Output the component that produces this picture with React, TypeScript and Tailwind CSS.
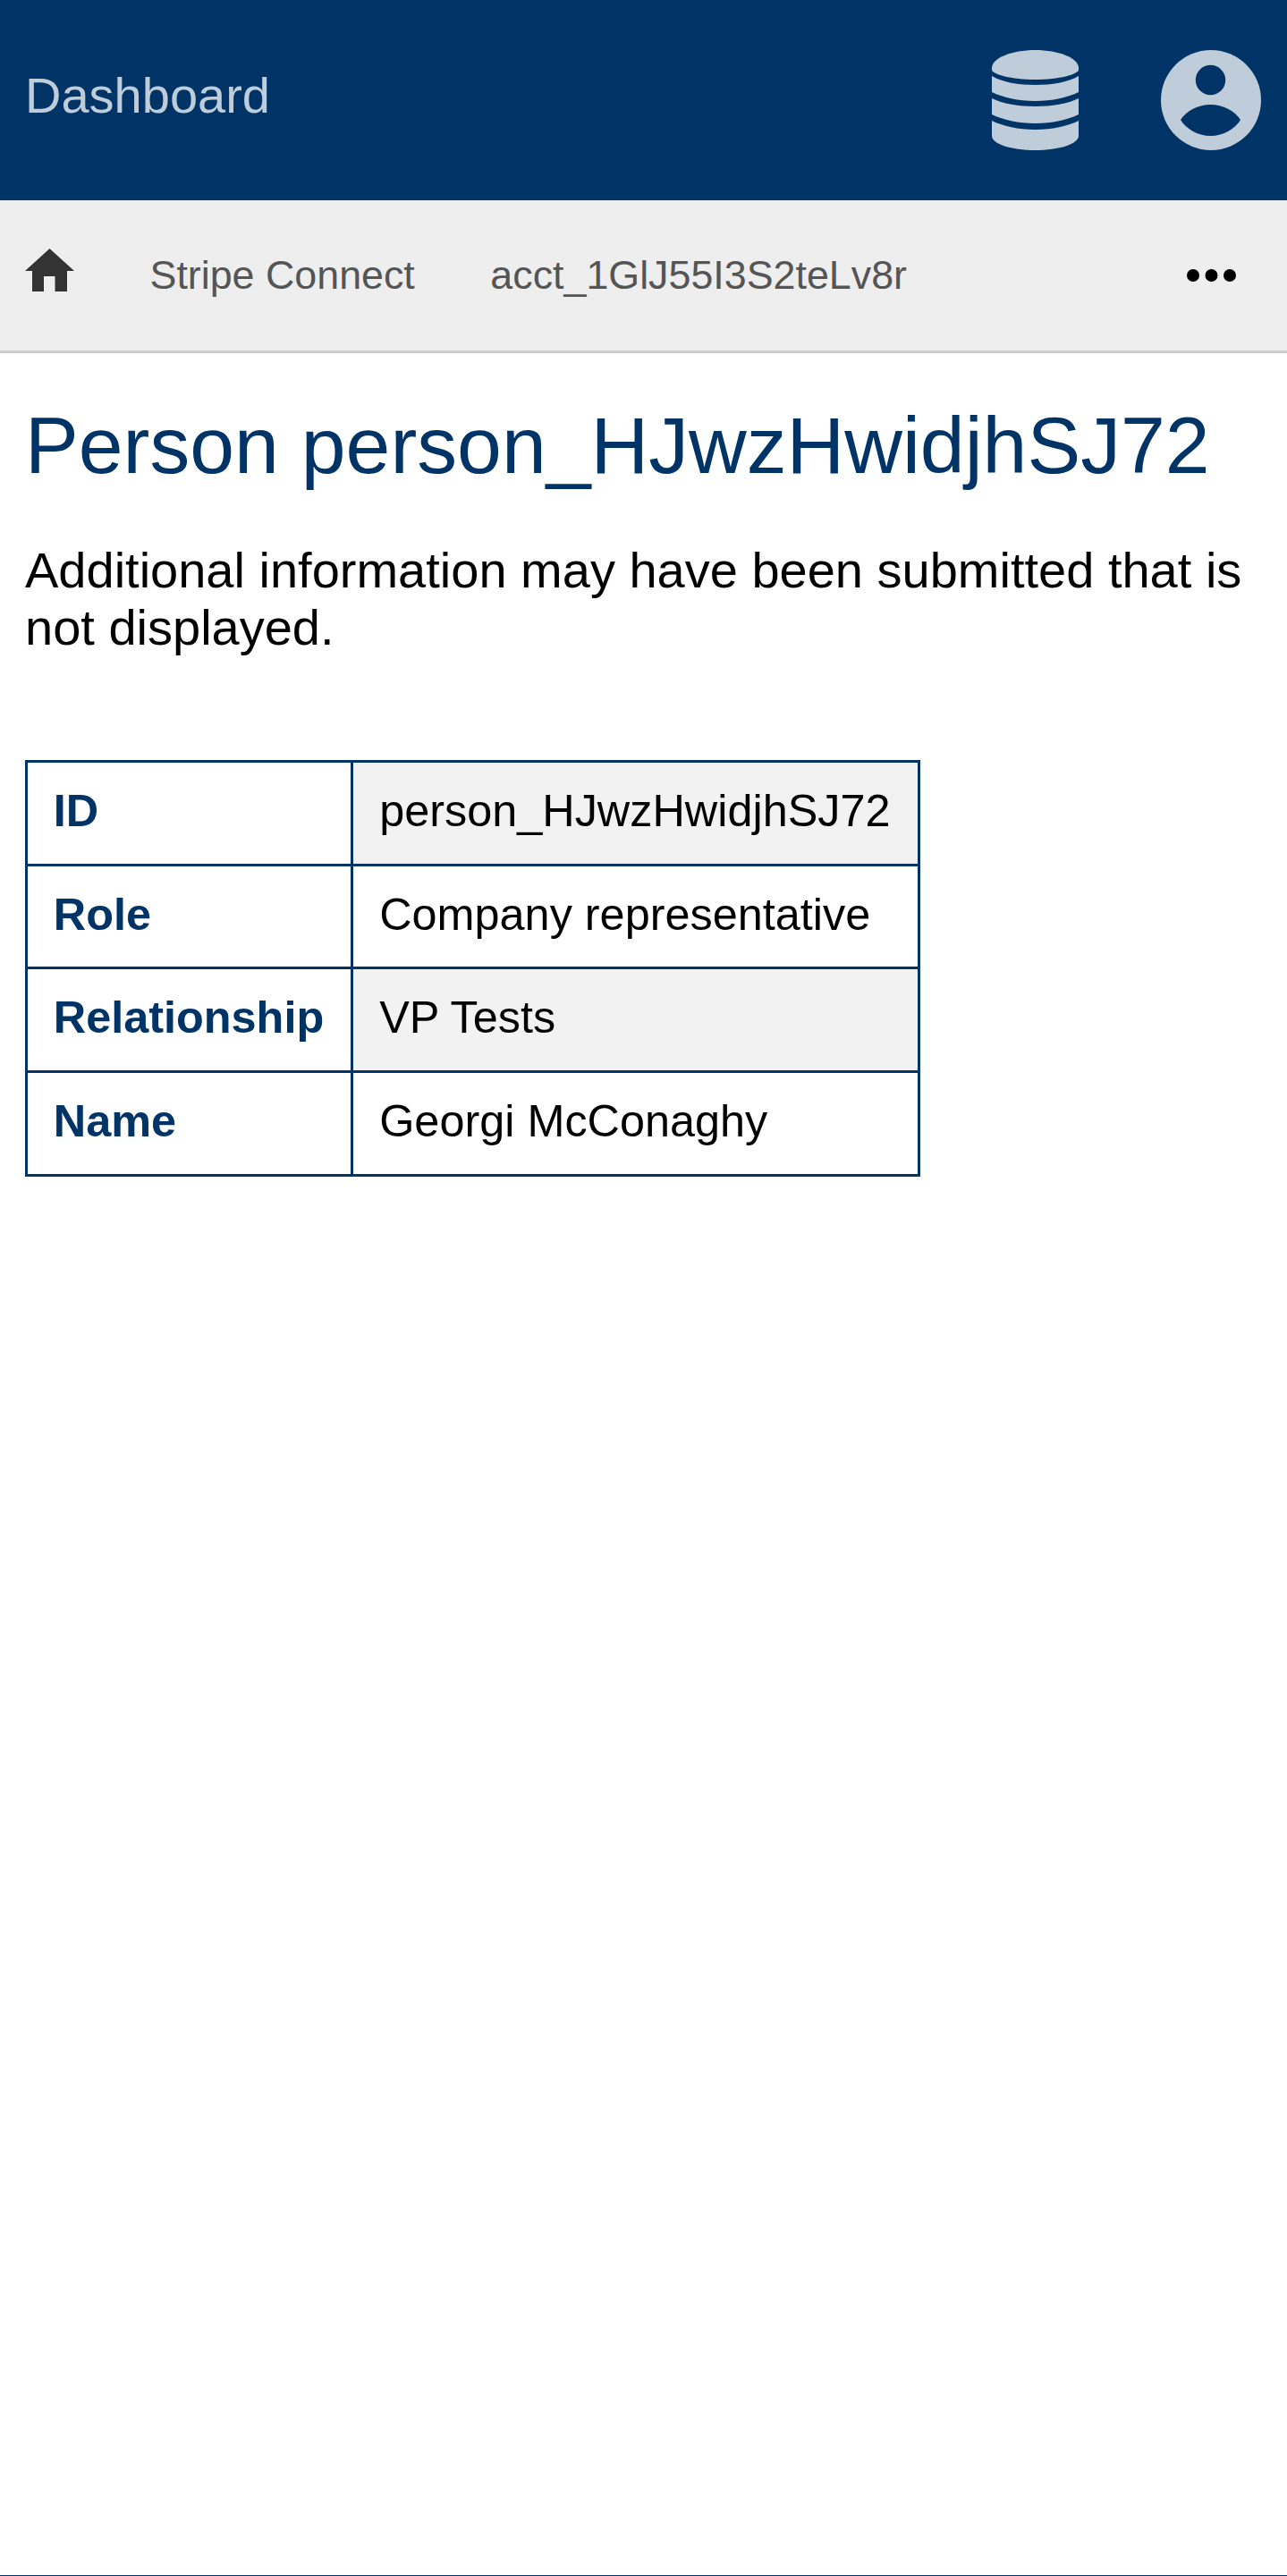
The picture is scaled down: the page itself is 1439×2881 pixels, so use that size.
const rows = [
  ["ID", "person_HJwzHwidjhSJ72"],
  ["Role", "Company representative"],
  ["Relationship", "VP Tests"],
  ["Name", "Georgi McConaghy"],
];

export default function App() {
  return (
    <div className="flex h-[2881px] flex-col border-b border-[#003366] bg-white font-['Liberation_Sans',Arial,sans-serif]">
      <header className="flex h-[224px] shrink-0 items-center justify-between bg-[#003366] pl-[28px] pr-[29px]">
        <a className="mb-[11px] text-[56px] leading-[64px] text-[#bfccd9]">Dashboard</a>
        <div className="flex items-center gap-[92px]">
          <svg viewBox="0 0 97 112" className="h-[112px] w-[97px]" fill="#bfccd9">
            <path d="M0 20C0 9 22 0 48.5 0C75 0 97 9 97 20L97 22C97 27 75 33 48.5 33C22 33 0 27 0 22Z" />
            <path d="M0 29C12 36 30 39 48.5 39C67 39 85 36 97 29L97 47C85 53 67 57 48.5 57C30 57 12 53 0 47Z" />
            <path d="M0 54C12 60 30 63 48.5 63C67 63 85 60 97 54L97 72C85 78 67 82 48.5 82C30 82 12 78 0 72Z" />
            <path d="M0 79C12 85 30 89 48.5 89C67 89 85 85 97 79L97 96C97 105 75 112 48.5 112C22 112 0 105 0 96Z" />
          </svg>
          <svg viewBox="0 0 112 112" className="h-[112px] w-[112px]">
            <circle cx="56" cy="56" r="56" fill="#bfccd9" />
            <circle cx="55.5" cy="33.5" r="16.7" fill="#003366" />
            <path d="M22 78C28 68 42 61 55.5 61C69 61 83 68 89 78C83 88 70 96 55.5 96C41 96 28 88 22 78Z" fill="#003366" />
          </svg>
        </div>
      </header>
      <nav className="flex h-[171px] shrink-0 items-center justify-between border-b-[3px] border-[#cccccc] bg-[#eeeeee] pl-[28px] pr-[57px]">
        <div className="flex items-center gap-[84.5px] pb-[3px] text-[44.8px] leading-[52px] text-[#555555]">
          <svg viewBox="0 0 55 48" className="mb-[10px] h-[48px] w-[55px]">
            <path d="M27.5 0L55 25L47 25L47 48L33.5 48L33.5 31L21 31L21 48L8 48L8 25L0 25Z" fill="#333333" />
          </svg>
          <a>Stripe Connect</a>
          <a>acct_1GlJ55I3S2teLv8r</a>
        </div>
        <svg viewBox="0 0 55 14" className="h-[14px] w-[55px]">
          <circle cx="7" cy="7" r="7" fill="#000" />
          <circle cx="27.5" cy="7" r="7" fill="#000" />
          <circle cx="48" cy="7" r="7" fill="#000" />
        </svg>
      </nav>
      <main className="px-[28px]">
        <h1 className="mt-[53px] text-[89.6px] leading-[100px] text-[#003366]">Person person_HJwzHwidjhSJ72</h1>
        <p className="mt-[58px] text-[56px] leading-[64px] text-black">
          Additional information may have been submitted that is not displayed.
        </p>
        <table className="mt-[116px] border-collapse text-[50.4px] leading-[56px]">
          <tbody>
            {rows.map(([k, v], i) => (
              <tr key={k} className="h-[115.7px]">
                <th className="border-[3px] border-[#003366] pb-[5px] pl-[28.8px] pr-[30px] text-left font-bold text-[#003366]">{k}</th>
                <td className={`border-[3px] border-[#003366] pb-[5px] pl-[29px] pr-[30px] text-black ${i % 2 === 0 ? "bg-[#f2f2f2]" : "bg-white"}`}>{v}</td>
              </tr>
            ))}
          </tbody>
        </table>
      </main>
    </div>
  );
}
